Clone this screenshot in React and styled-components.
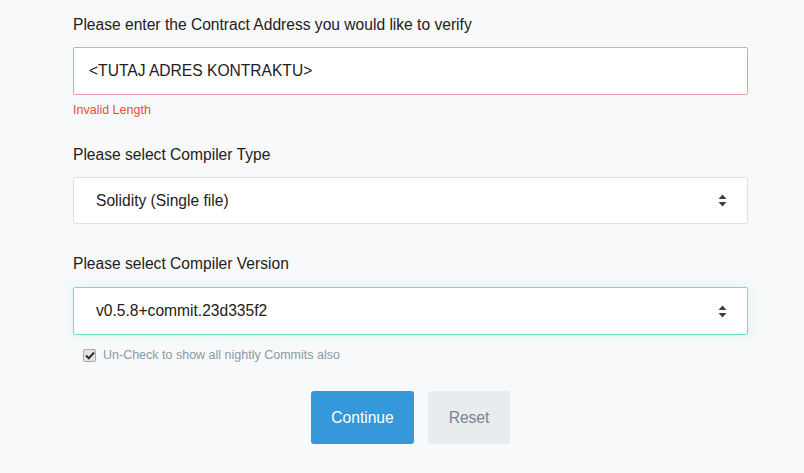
import React from 'react'
import styled, { createGlobalStyle } from 'styled-components'

const Global = createGlobalStyle`
  body {
    margin: 0;
    background: #f8f9fa;
    font-family: "Liberation Sans", Arial, sans-serif;
  }
`

const Form = styled.div`
  width: 675px;
  margin-left: 73px;
  padding-top: 15px;
  display: flex;
  flex-direction: column;
`

const Label = styled.div`
  font-size: 15.6px;
  line-height: 20px;
  color: #1e2022;
  margin-top: ${p => p.$top || 0}px;
`

const Field = styled.div`
  box-sizing: border-box;
  height: ${p => p.$h}px;
  margin-top: ${p => p.$top}px;
  display: flex;
  align-items: center;
  justify-content: space-between;
  padding: 0 20px 0 ${p => p.$pl}px;
  background: #fff;
  border: 1px solid ${p => p.$border};
  border-radius: 2px;
  box-shadow: ${p => p.$glow ? '0 0 10px rgba(110, 224, 204, 0.25)' : 'none'};
  font-size: 15.6px;
  color: #1e2022;
`

const Error = styled.div`
  margin-top: 7px;
  font-size: 12.5px;
  line-height: 16px;
  color: #e74c3c;
`

const Hint = styled.div`
  margin-top: 13px;
  margin-left: 10px;
  display: flex;
  align-items: center;
  gap: 7px;
  font-size: 12.5px;
  color: #8c98a4;
`

const CheckBox = styled.span`
  width: 13px;
  height: 13px;
  box-sizing: border-box;
  border: 1px solid #a9a9a9;
  border-radius: 2px;
  background: #e4e4e4;
  display: flex;
  align-items: center;
  justify-content: center;
`

const Buttons = styled.div`
  margin-top: 29px;
  display: flex;
  justify-content: center;
  gap: 14px;
`

const Button = styled.button`
  height: 53px;
  width: ${p => p.$w}px;
  border: none;
  border-radius: 3px;
  font-family: inherit;
  font-size: 15.6px;
  background: ${p => p.$primary ? '#3498db' : '#e9ecef'};
  color: ${p => p.$primary ? '#fff' : '#77838f'};
`

const Arrows = () => (
  <svg width="9" height="13" viewBox="0 0 9 13">
    <path d="M4.5 0.5 L8.5 5 L0.5 5 Z" fill="#3b4148" />
    <path d="M0.5 8 L8.5 8 L4.5 12.5 Z" fill="#3b4148" />
  </svg>
)

export default function App() {
  return (
    <>
      <Global />
      <Form>
        <Label>Please enter the Contract Address you would like to verify</Label>
        <Field $h={48} $top={12} $pl={15} $border="#e8a49c">
          &lt;TUTAJ ADRES KONTRAKTU&gt;
        </Field>
        <Error>Invalid Length</Error>
        <Label $top={27}>Please select Compiler Type</Label>
        <Field $h={47} $top={12} $pl={22} $border="#dde1e6">
          Solidity (Single file)
          <Arrows />
        </Field>
        <Label $top={30}>Please select Compiler Version</Label>
        <Field $h={48} $top={13} $pl={22} $border="#6ee0cc" $glow>
          v0.5.8+commit.23d335f2
          <Arrows />
        </Field>
        <Hint>
          <CheckBox>
            <svg width="10" height="9" viewBox="0 0 10 9">
              <path d="M1 4.5 L3.8 7.3 L9 1.5" stroke="#2b2b2b" strokeWidth="2" fill="none" />
            </svg>
          </CheckBox>
          Un-Check to show all nightly Commits also
        </Hint>
        <Buttons>
          <Button $primary $w={103}>Continue</Button>
          <Button $w={82}>Reset</Button>
        </Buttons>
      </Form>
    </>
  )
}
